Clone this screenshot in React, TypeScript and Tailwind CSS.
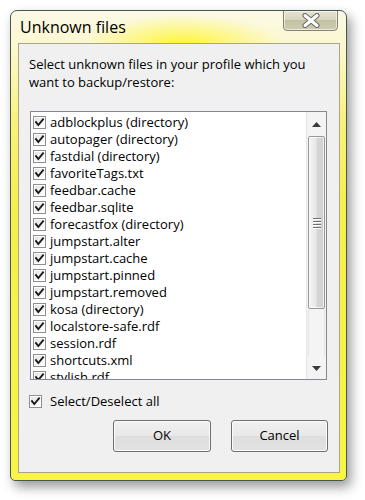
import React from "react";

const items = [
  "adblockplus (directory)",
  "autopager (directory)",
  "fastdial (directory)",
  "favoriteTags.txt",
  "feedbar.cache",
  "feedbar.sqlite",
  "forecastfox (directory)",
  "jumpstart.alter",
  "jumpstart.cache",
  "jumpstart.pinned",
  "jumpstart.removed",
  "kosa (directory)",
  "localstore-safe.rdf",
  "session.rdf",
  "shortcuts.xml",
  "stylish.rdf",
];

function Check() {
  return (
    <svg width="13" height="13" viewBox="0 0 13 13" className="shrink-0 block">
      <defs>
        <linearGradient id="cbg" x1="0" y1="0" x2="1" y2="1">
          <stop offset="0" stopColor="#e4e4e4" />
          <stop offset="1" stopColor="#ffffff" />
        </linearGradient>
      </defs>
      <rect x="0.5" y="0.5" width="12" height="12" fill="#fff" stroke="#8e8f8f" />
      <rect x="2" y="2" width="9" height="9" fill="url(#cbg)" />
      <path d="M3 6.2 L5.3 9 L10 3.4" fill="none" stroke="#1a1a1a" strokeWidth="1.9" strokeLinecap="square" />
    </svg>
  );
}

function Arrow({ up }: { up?: boolean }) {
  return (
    <svg width="9" height="5" viewBox="0 0 9 5" className="block">
      {up ? (
        <path d="M0 5 L4.5 0 L9 5 Z" fill="#3a3a3a" />
      ) : (
        <path d="M0 0 L9 0 L4.5 5 Z" fill="#3a3a3a" />
      )}
    </svg>
  );
}

function CloseX() {
  return (
    <svg width="18" height="15" viewBox="0 0 18 15" className="block">
      <path d="M3 2.5 L15 12.5 M15 2.5 L3 12.5" stroke="#6f7068" strokeWidth="5.2" strokeLinecap="round" />
      <path d="M3 2.5 L15 12.5 M15 2.5 L3 12.5" stroke="#ffffff" strokeWidth="3" strokeLinecap="round" />
    </svg>
  );
}

export default function App() {
  return (
    <div
      className="w-[365px] h-[500px] bg-white pt-[10px] pl-[10px] overflow-hidden"
      style={{ fontFamily: '"Open Sans", "Noto Sans", sans-serif' }}
    >
      <div className="w-[337px] h-[471px] rounded-t-[7px] rounded-b-[5px] border border-[#43594c] shadow-[4px_6px_12px_rgba(0,0,0,0.4)] bg-[linear-gradient(to_bottom,#fbf9e6_0px,#fcf8cc_40px,#f9f27c_110px,#f7ef4a_200px,#f9f446_100%)] flex flex-col overflow-hidden">
        {/* title bar */}
        <div className="h-[32px] flex items-start pl-[9px] bg-[radial-gradient(ellipse_100px_30px_at_172px_34px,#fff430_0%,rgba(255,246,90,0.75)_40%,rgba(255,250,200,0)_100%)]">
          <div className="text-[16px] leading-[32px] text-black">Unknown files</div>
          <div className="ml-auto mr-[8px] -mt-[1px] w-[55px] h-[21px] rounded-b-[4px] border border-[#85836c] bg-[linear-gradient(to_bottom,#e6e4d2,#d6d3bb_50%,#c4c0a2_50%,#cfcbb0)] shadow-[inset_0_0_0_1px_rgba(255,255,255,0.6)] flex items-center justify-center">
            <CloseX />
          </div>
        </div>
        {/* client */}
        <div className="ml-[7px] w-[322px] h-[430px] border border-[#aaa584] bg-[#f0f0f0] flex flex-col">
          <div className="mt-[11px] ml-[10px] text-[13px] leading-[18px] text-black">
            Select unknown files in your profile which you
            <br />
            want to backup/restore:
          </div>
          <div className="mt-[20px] ml-[11px] w-[297px] h-[269px] border border-[#828790] bg-white flex">
            <div className="flex-1 pt-[2px] pl-[2px] overflow-hidden">
              {items.map((it) => (
                <div key={it} className="h-[17px] flex items-center gap-[4px]">
                  <Check />
                  <span className="text-[13px] leading-[17px] text-black whitespace-nowrap">{it}</span>
                </div>
              ))}
            </div>
            <div className="w-[20px] h-full flex flex-col bg-[#f4f4f4] border-l border-[#e6e6e6]">
              <div className="h-[24px] flex items-center justify-center">
                <Arrow up />
              </div>
              <div className="h-[173px] mx-[1px] rounded-[2px] border border-[#979797] bg-[linear-gradient(to_right,#f4f4f4,#e8e8e8_45%,#d6d6d6_55%,#d0d0d0)] shadow-[inset_0_0_0_1px_rgba(255,255,255,0.7)] flex items-center justify-center">
                <div className="flex flex-col gap-[1px]">
                  <div className="w-[8px] h-[1px] bg-[#6f6f6f] shadow-[0_1px_0_#ffffff]" />
                  <div className="w-[8px] h-[1px] bg-[#6f6f6f] shadow-[0_1px_0_#ffffff] mt-[1px]" />
                  <div className="w-[8px] h-[1px] bg-[#6f6f6f] shadow-[0_1px_0_#ffffff] mt-[1px]" />
                  <div className="w-[8px] h-[1px] bg-[#6f6f6f] shadow-[0_1px_0_#ffffff] mt-[1px]" />
                </div>
              </div>
              <div className="flex-1 mx-[1px] border-x border-[#e4e4e4]" />
              <div className="h-[22px] flex items-center justify-center">
                <Arrow />
              </div>
            </div>
          </div>
          <div className="mt-[13px] ml-[10px] h-[17px] flex items-center gap-[8px]">
            <Check />
            <span className="text-[13px] leading-[17px] text-black">Select/Deselect all</span>
          </div>
          <div className="mt-[10px] flex justify-end gap-[20px] pr-[11px]">
            <button className="w-[98px] h-[32px] rounded-[3px] border border-[#6f6f6f] bg-[linear-gradient(to_bottom,#f0f0f0,#e8e8e8_50%,#dedede_50%,#e2e2e2)] shadow-[inset_0_0_0_1px_#fbfbfb] text-[13px] text-black">
              OK
            </button>
            <button className="w-[97px] h-[32px] rounded-[3px] border border-[#6f6f6f] bg-[linear-gradient(to_bottom,#f0f0f0,#e8e8e8_50%,#dedede_50%,#e2e2e2)] shadow-[inset_0_0_0_1px_#fbfbfb] text-[13px] text-black">
              Cancel
            </button>
          </div>
        </div>
      </div>
    </div>
  );
}
